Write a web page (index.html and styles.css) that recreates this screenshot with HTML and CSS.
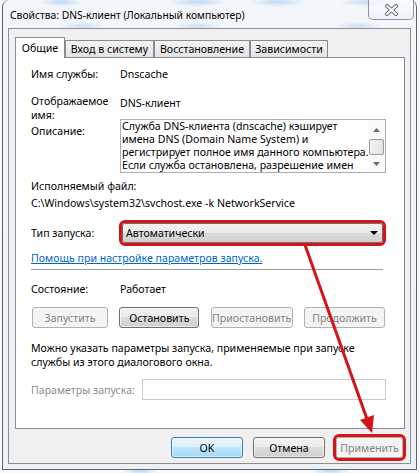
FILE: index.html
```html
<!DOCTYPE html>
<html lang="ru">
<head>
  <meta charset="UTF-8" />
  <title>Свойства: DNS-клиент (Локальный компьютер)</title>
  <link rel="stylesheet" href="styles.css">
</head>
<body>
  <div class="window">
    <div class="titlebar">
      <span class="title">Свойства: DNS-клиент (Локальный компьютер)</span>
      <div class="close-btn">
        <svg width="15" height="12" viewBox="0 0 15 12">
          <path d="M3 2 L12 10 M12 2 L3 10" stroke="#6a7079" stroke-width="4" stroke-linecap="round" fill="none"/>
          <path d="M3 2 L12 10 M12 2 L3 10" stroke="#ffffff" stroke-width="2" stroke-linecap="round" fill="none"/>
        </svg>
      </div>
    </div>

    <div class="client">
      <div class="tabs">
        <div class="tab active tab-general">Общие</div>
        <div class="tab tab-logon">Вход в систему</div>
        <div class="tab tab-recovery">Восстановление</div>
        <div class="tab tab-deps">Зависимости</div>
      </div>

      <div class="tab-page">
        <div class="field-row row-name">
          <span class="label">Имя службы:</span>
          <span class="value">Dnscache</span>
        </div>

        <div class="field-row row-display">
          <span class="label">Отображаемое<br>имя:</span>
          <span class="value">DNS-клиент</span>
        </div>

        <div class="field-row row-desc">
          <span class="label">Описание:</span>
          <div class="desc-box">
            <div class="desc-text">
              Служба DNS-клиента (dnscache) кэширует<br>
              имена DNS (Domain Name System) и<br>
              регистрирует полное имя данного компьютера.<br>
              Если служба остановлена, разрешение имен
            </div>
            <div class="scrollbar">
              <div class="sb-up">
                <svg width="7" height="4" viewBox="0 0 7 4"><path d="M0 4 L3.5 0 L7 4 Z" fill="#6b6b6b"/></svg>
              </div>
              <div class="sb-thumb"></div>
              <div class="sb-down">
                <svg width="7" height="4" viewBox="0 0 7 4"><path d="M0 0 L7 0 L3.5 4 Z" fill="#6b6b6b"/></svg>
              </div>
            </div>
          </div>
        </div>

        <div class="exe-label">Исполняемый файл:</div>
        <div class="exe-path">C:\Windows\system32\svchost.exe -k NetworkService</div>

        <div class="field-row row-startup">
          <span class="label">Тип запуска:</span>
          <div class="combo highlight">
            <span>Автоматически</span>
            <svg width="8" height="4" viewBox="0 0 8 4"><path d="M0 0 L8 0 L4 4 Z" fill="#000"/></svg>
          </div>
        </div>

        <a class="help-link" href="#">Помощь при настройке параметров запуска.</a>

        <div class="separator"></div>

        <div class="field-row row-state">
          <span class="label">Состояние:</span>
          <span class="value">Работает</span>
        </div>

        <div class="service-buttons">
          <div class="btn disabled btn-start">Запустить</div>
          <div class="btn btn-stop">Остановить</div>
          <div class="btn disabled btn-pause">Приостановить</div>
          <div class="btn disabled btn-resume">Продолжить</div>
        </div>

        <p class="note">Можно указать параметры запуска, применяемые при запуске<br>службы из этого диалогового окна.</p>

        <div class="field-row row-params">
          <span class="label disabled-text">Параметры запуска:</span>
          <div class="text-input"></div>
        </div>
      </div>

      <div class="dialog-buttons">
        <div class="btn default btn-dialog">OK</div>
        <div class="btn btn-dialog">Отмена</div>
        <div class="btn disabled btn-apply highlight">Применить</div>
      </div>
    </div>
  </div>

  <svg class="annotation" width="420" height="473" viewBox="0 0 420 473">
    <line x1="305" y1="245" x2="367" y2="419" stroke="#d3141b" stroke-width="3"/>
    <polygon points="372,433 360,420 374,415" fill="#d3141b"/>
  </svg>
</body>
</html>
```

FILE: styles.css
```css
* {
  box-sizing: border-box;
  margin: 0;
  padding: 0;
}

body {
  width: 420px;
  height: 473px;
  overflow: hidden;
  position: relative;
  font-family: 'Noto Sans', 'Open Sans', sans-serif;
  font-size: 10.6px;
  line-height: 14px;
  color: #000;
  background:
    radial-gradient(ellipse 18px 4px at 140px 471px, rgba(120, 190, 240, 0.5), transparent),
    radial-gradient(ellipse 20px 4px at 330px 471px, rgba(120, 190, 240, 0.5), transparent),
    #f7fafd;
}

/* window frame */
.window {
  width: 415px;
  height: 470px;
  margin-left: 2px;
  padding: 0 5px 5px 5px;
  border: 1px solid #5d636b;
  border-top: none;
  border-top-left-radius: 7px;
  border-top-right-radius: 7px;
  background:
    radial-gradient(ellipse 22px 5px at 58px 2px, rgba(130, 180, 235, 0.45), transparent),
    radial-gradient(ellipse 30px 5px at 195px 2px, rgba(130, 180, 235, 0.45), transparent),
    radial-gradient(ellipse 28px 5px at 275px 2px, rgba(130, 180, 235, 0.45), transparent),
    radial-gradient(ellipse 30px 5px at 365px 2px, rgba(130, 180, 235, 0.4), transparent),
    radial-gradient(ellipse 25px 4px at 80px 26px, rgba(130, 180, 235, 0.35), transparent),
    radial-gradient(ellipse 25px 4px at 195px 26px, rgba(130, 180, 235, 0.35), transparent),
    radial-gradient(ellipse 25px 4px at 355px 26px, rgba(130, 180, 235, 0.35), transparent),
    linear-gradient(to bottom, #f4f7fa, #eef1f4);
}

.titlebar {
  height: 28px;
  display: flex;
  justify-content: space-between;
  align-items: flex-start;
}

.title {
  padding: 8px 0 0 2px;
  font-size: 10.3px;
  color: #000;
}

.close-btn {
  width: 46px;
  height: 20px;
  margin-right: -3px;
  border: 1px solid #8e949c;
  border-top: none;
  border-radius: 0 0 5px 5px;
  background: linear-gradient(to bottom, rgba(255, 255, 255, 0.6), rgba(235, 242, 250, 0.8));
  display: flex;
  align-items: center;
  justify-content: center;
  padding-top: 1px;
}

/* client area */
.client {
  height: 436px;
  padding: 8px 7px 5px 6px;
  background: #f0f0f0;
  border: 1px solid #8b8f95;
}

.tabs {
  height: 20px;
  display: flex;
  align-items: flex-end;
}

.tab {
  height: 17px;
  border: 1px solid #898c95;
  border-bottom: none;
  background: linear-gradient(to bottom, #f3f3f3, #e4e4e4);
  display: flex;
  align-items: center;
  justify-content: center;
  white-space: nowrap;
}

.tab.active {
  height: 21px;
  margin-bottom: -1px;
  background: #fff;
  position: relative;
  z-index: 1;
}

.tab-general { width: 50px; }
.tab-logon { width: 89px; }
.tab-recovery { width: 96px; }
.tab-deps { width: 78px; }

.tab-page {
  width: 390px;
  height: 372px;
  background: #fff;
  border: 1px solid #898c95;
  padding: 9px 18px 0 15px;
}

.field-row {
  display: flex;
}

.field-row .label {
  width: 89px;
  flex-shrink: 0;
}

.row-display {
  margin-top: 13px;
  height: 25px;
}

.row-display .value {
  padding-top: 2px;
}

.row-desc .label {
  padding-top: 5px;
}

.desc-box {
  width: 266px;
  height: 54px;
  border: 1px solid #abadb3;
  display: flex;
}

.desc-text {
  flex: 1;
  padding: 0 0 0 1px;
  line-height: 13px;
  overflow: hidden;
  white-space: nowrap;
}

.scrollbar {
  width: 17px;
  display: flex;
  flex-direction: column;
  align-items: center;
  background: #fafafa;
}

.sb-up {
  height: 19px;
  display: flex;
  align-items: center;
  justify-content: center;
}

.sb-thumb {
  width: 15px;
  height: 16px;
  border: 1px solid #9a9a9a;
  border-radius: 2px;
  background: linear-gradient(to right, #f3f3f3, #e2e2e2);
}

.sb-down {
  flex: 1;
  display: flex;
  align-items: center;
  justify-content: center;
}

.exe-label {
  margin-top: 6px;
}

.exe-path {
  margin-top: 3px;
}

.row-startup {
  margin-top: 13px;
  height: 20px;
  align-items: center;
}

.row-startup .label {
  width: 91px;
}

.combo {
  width: 261px;
  height: 20px;
  border: 1px solid #707070;
  border-radius: 3px;
  background: linear-gradient(to bottom, #f2f2f2 0%, #ebebeb 50%, #dddddd 50%, #cfcfcf 100%);
  display: flex;
  align-items: center;
  justify-content: space-between;
  padding: 0 4px 0 3px;
}

.highlight {
  outline: 3px solid #d3141b;
  outline-offset: 0;
}

.help-link {
  display: block;
  margin-top: 8px;
  color: #0066cc;
  text-decoration: underline;
  width: max-content;
}

.separator {
  margin-top: 4px;
  width: 352px;
  height: 1px;
  background: #a0a0a0;
}

.row-state {
  margin-top: 12px;
}

.service-buttons {
  margin-top: 11px;
  display: flex;
  justify-content: space-between;
  padding-left: 1px;
  width: 354px;
}

.btn {
  height: 21px;
  border: 1px solid #707070;
  border-radius: 3px;
  background: linear-gradient(to bottom, #f2f2f2 0%, #ebebeb 50%, #dddddd 50%, #cfcfcf 100%);
  box-shadow: inset 0 0 0 1px rgba(255, 255, 255, 0.6);
  display: flex;
  align-items: center;
  justify-content: center;
  white-space: nowrap;
}

.btn.disabled {
  border-color: #adb2b5;
  background: #f4f4f4;
  box-shadow: none;
  color: #838383;
}

.btn.default {
  border-color: #3c7fb1;
  background: linear-gradient(to bottom, #eaf6fd 0%, #d9f0fc 50%, #bee6fd 50%, #a7d9f5 100%);
}

.btn-start { width: 76px; }
.btn-stop { width: 80px; }
.btn-pause { width: 82px; }
.btn-resume { width: 81px; }

.note {
  margin-top: 13px;
}

.row-params {
  margin-top: 10px;
  height: 21px;
  align-items: center;
}

.row-params .label {
  width: 111px;
}

.disabled-text {
  color: #8d8d8d;
}

.text-input {
  width: 244px;
  height: 21px;
  border: 1px solid #c9cbd0;
  background: #fff;
}

.dialog-buttons {
  margin-top: 8px;
  display: flex;
  justify-content: flex-end;
  gap: 10px;
}

.btn-dialog { width: 72px; }
.btn-apply { width: 67px; margin-left: 1px; }

.annotation {
  position: absolute;
  left: 0;
  top: 0;
  pointer-events: none;
}
```
